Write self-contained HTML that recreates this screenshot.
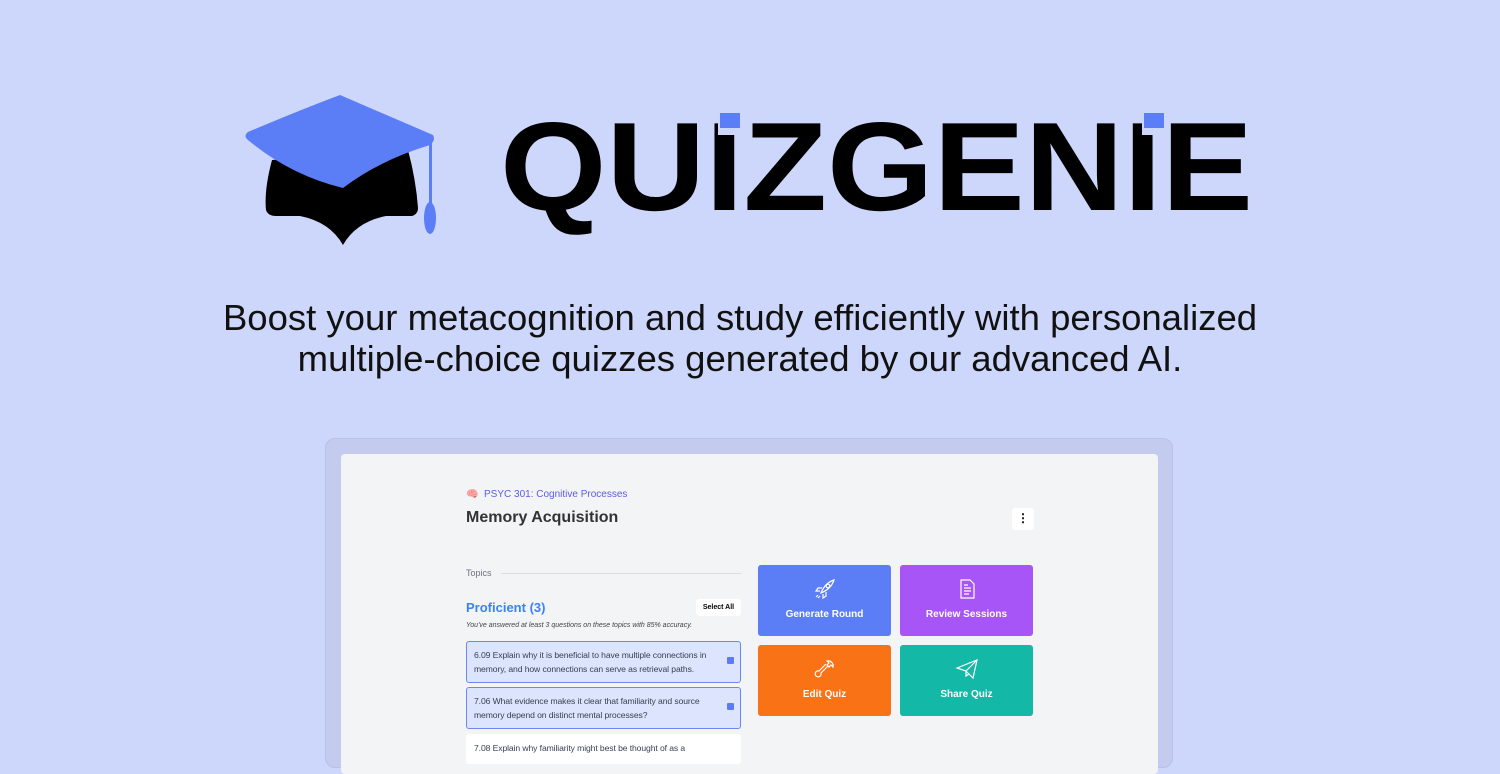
<!DOCTYPE html>
<html><head><style>
*{margin:0;padding:0;box-sizing:border-box}
body{width:1500px;height:750px;overflow:hidden;background:#cdd6fb;font-family:"Liberation Sans",sans-serif;position:relative}
.sub{position:absolute;left:-10px;width:1500px;top:297px;text-align:center;font-size:36.5px;line-height:41px;color:#111}
.frame{position:absolute;left:325px;top:438px;width:848px;height:330px;background:#c3cbef;border-radius:10px;border:1px solid #b8c1ec}
.panel{position:absolute;left:341px;top:454px;width:817px;height:320px;background:#f3f4f6;border-radius:4px}
.abs{position:absolute}
.btn{position:absolute;width:133px;height:71px;border-radius:3px;color:#fff;font-weight:bold;font-size:10px;text-align:center}
.btn span{position:absolute;left:0;right:0;top:44px}
.btn svg{position:absolute;left:55px;top:12px}
.card{position:absolute;left:466px;width:275px;border:1.5px solid #6b86f5;background:#dde4fd;border-radius:3px;font-size:8.6px;letter-spacing:-0.1px;line-height:14px;color:#374151;padding:6px 16px 6px 7px}
.chk{position:absolute;right:6px;top:15px;width:7px;height:7px;background:#5b7cf6;border-radius:1px}
</style></head><body>
<svg class="abs" style="left:0;top:0" width="1500" height="260">
<path d="M272 160 Q264 190 266 210 Q268 216 276 216 L300 216 Q330 222 343 245 Q356 222 386 216 L412 216 Q418 214 418 208 Q416 180 408 150 Z" fill="#000"/>
<path d="M248 132 Q300 110 340 95 L433 135 Q436 140 430 145 Q380 160 343 188 Q290 175 248 140 Q243 136 248 132 Z" fill="#5b7ef7"/>
<rect x="429" y="140" width="3" height="65" fill="#5b7ef7"/>
<ellipse cx="430" cy="218" rx="6" ry="16" fill="#5b7ef7"/>
<text x="500" y="210" font-family="Liberation Sans" font-weight="bold" font-size="126" textLength="753" lengthAdjust="spacingAndGlyphs">QUIZGENIE</text>
<rect x="718" y="100" width="24" height="35" fill="#cdd6fb"/>
<rect x="720" y="113" width="20" height="15" fill="#5b7ef7"/>
<rect x="1142" y="100" width="24" height="35" fill="#cdd6fb"/>
<rect x="1144" y="113" width="20" height="15" fill="#5b7ef7"/>
</svg>
<div class="sub">Boost your metacognition and study efficiently with personalized<br>multiple-choice quizzes generated by our advanced AI.</div>
<div class="frame"></div>
<div class="panel"></div>
<div class="abs" style="left:466px;top:489px;font-size:10px;color:#5b5ce6"><span style="color:#e88">🧠</span>&nbsp; PSYC 301: Cognitive Processes</div>
<div class="abs" style="left:466px;top:509px;font-size:16px;font-weight:bold;color:#333">Memory Acquisition</div>
<div class="abs" style="left:1012px;top:508px;width:22px;height:22px;background:#fff;border-radius:3px;text-align:center;font-size:12px;line-height:21px;font-weight:bold">⋮</div>
<div class="abs" style="left:466px;top:568px;font-size:9px;color:#6b7280">Topics</div>
<div class="abs" style="left:501px;top:573px;width:240px;height:1px;background:#ddd"></div>
<div class="abs" style="left:466px;top:600px;font-size:13px;font-weight:bold;color:#3b82f6">Proficient (3)</div>
<div class="abs" style="left:696px;top:599px;width:45px;height:17px;background:#fff;border-radius:3px;font-size:7px;font-weight:bold;text-align:center;line-height:17px">Select All</div>
<div class="abs" style="left:466px;top:622px;font-size:7px;font-style:italic;color:#444">You've answered at least 3 questions on these topics with 85% accuracy.</div>
<div class="card" style="top:641px;height:42px">6.09 Explain why it is beneficial to have multiple connections in memory, and how connections can serve as retrieval paths.<div class="chk"></div></div>
<div class="card" style="top:687px;height:42px">7.06 What evidence makes it clear that familiarity and source memory depend on distinct mental processes?<div class="chk"></div></div>
<div class="card" style="top:734px;height:30px;background:#fff;border-color:#fff">7.08 Explain why familiarity might best be thought of as a</div>
<div class="btn" style="left:758px;top:565px;background:#5b7ef7"><svg width="24" height="24" viewBox="0 0 24 24" fill="none" stroke="#fff" stroke-width="1.2"><path d="M8 16 Q12 6 21 3 Q18 12 8 16Z M9 11 L5 11 L3 14 L7 14 M13 15 L13 19 L10 21 L10 17"/><circle cx="15" cy="9" r="1.8"/><path d="M5 18 L3 20 M7 19 L5 21"/></svg><span>Generate Round</span></div>
<div class="btn" style="left:900px;top:565px;background:#a855f7"><svg width="24" height="24" viewBox="0 0 24 24" fill="none" stroke="#fff" stroke-width="1.2"><path d="M6 3 H15 L19 7 V21 H6 Z M9 8 H13 M9 11 H16 M9 14 H16 M9 17 H14"/></svg><span>Review Sessions</span></div>
<div class="btn" style="left:758px;top:645px;background:#f97316"><svg width="24" height="24" viewBox="0 0 24 24" fill="none" stroke="#fff" stroke-width="1.2"><path d="M14 4 A5 5 0 0 1 20 10 L18 8 L16 10 L14 8 L16 6 Z M15 9 L8 16 A3 3 0 1 1 6 14 L13 7"/></svg><span>Edit Quiz</span></div>
<div class="btn" style="left:900px;top:645px;background:#14b8a6"><svg width="24" height="24" viewBox="0 0 24 24" fill="none" stroke="#fff" stroke-width="1.2"><path d="M2 11 L22 3 L18 21 L11 14 Z M11 14 L11 19 L14 17 M11 14 L22 3"/></svg><span>Share Quiz</span></div>
</body></html>
